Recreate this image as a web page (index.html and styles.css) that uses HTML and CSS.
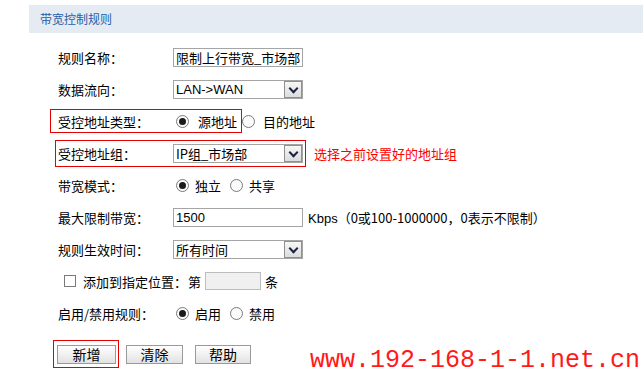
FILE: index.html
```html
<!DOCTYPE html>
<html lang="zh">
<head>
    <meta charset="UTF-8">
    <title>带宽控制规则</title>
    <link rel="stylesheet" href="styles.css">
</head>
<body>
    <div class="panel-title">带宽控制规则</div>

    <div class="rule-form">
        <div class="form-row">
            <span class="row-label">规则名称：</span>
            <span class="text-box wide">限制上行带宽_市场部</span>
        </div>

        <div class="form-row">
            <span class="row-label">数据流向：</span>
            <span class="select-box"><span class="select-text latin">LAN-&gt;WAN</span><span class="select-arrow"></span></span>
        </div>

        <div class="form-row">
            <span class="mark mark-type"></span>
            <span class="row-label">受控地址类型：</span>
            <span class="radio checked"></span><span class="opt opt-src">源地址</span>
            <span class="radio"></span><span class="opt opt-dst">目的地址</span>
        </div>

        <div class="form-row">
            <span class="mark mark-group"></span>
            <span class="row-label">受控地址组：</span>
            <span class="select-box"><span class="select-text">IP组_市场部</span><span class="select-arrow"></span></span>
            <span class="note">选择之前设置好的地址组</span>
        </div>

        <div class="form-row">
            <span class="row-label">带宽模式：</span>
            <span class="radio checked"></span><span class="opt">独立</span>
            <span class="radio"></span><span class="opt">共享</span>
        </div>

        <div class="form-row">
            <span class="row-label">最大限制带宽：</span>
            <span class="text-box wide latin">1500</span>
            <span class="unit"><span class="latin">Kbps</span>（0或100-1000000，0表示不限制）</span>
        </div>

        <div class="form-row">
            <span class="row-label">规则生效时间：</span>
            <span class="select-box"><span class="select-text">所有时间</span><span class="select-arrow"></span></span>
        </div>

        <div class="form-row">
            <span class="check-label"><span class="checkbox"></span>添加到指定位置：</span>
            <span class="pos-text">第</span>
            <span class="text-box small"></span>
            <span class="pos-text">条</span>
        </div>

        <div class="form-row">
            <span class="row-label">启用/禁用规则：</span>
            <span class="radio checked"></span><span class="opt">启用</span>
            <span class="radio"></span><span class="opt">禁用</span>
        </div>

        <div class="button-row">
            <span class="mark mark-add"></span>
            <button class="btn btn-add">新增</button>
            <button class="btn btn-clear">清除</button>
            <button class="btn btn-help">帮助</button>
            <span class="watermark">www.192-168-1-1.net.cn</span>
        </div>
    </div>
</body>
</html>
```

FILE: styles.css
```css
:root {
    --title-bg: #e4ebf3;
    --title-text: #1f5fa6;
    --border-gray: #a5a5a5;
    --mark-red: #e60000;
    --text-main: #000000;
}

* {
    margin: 0;
    padding: 0;
    box-sizing: border-box;
}

body {
    font-family: "Noto Sans CJK SC", sans-serif;
    font-size: 13px;
    color: var(--text-main);
    background: #ffffff;
    width: 643px;
    height: 379px;
    overflow: hidden;
}

.latin {
    font-family: "Liberation Sans", "Noto Sans CJK SC", sans-serif;
}

.panel-title {
    margin: 5px 0 0 29px;
    height: 28px;
    line-height: 28px;
    padding-left: 11px;
    background: var(--title-bg);
    color: var(--title-text);
    font-size: 12px;
}

.rule-form {
    padding-top: 8px;
}

.form-row {
    position: relative;
    display: flex;
    align-items: center;
    height: 32px;
}

.row-label {
    width: 173px;
    padding-left: 58px;
    flex-shrink: 0;
    white-space: nowrap;
}

.text-box {
    display: flex;
    align-items: center;
    height: 19px;
    border: 1px solid var(--border-gray);
    padding-left: 2px;
    line-height: 1;
    white-space: nowrap;
    overflow: hidden;
}

.text-box.wide {
    width: 130px;
}

.text-box.small {
    width: 56px;
    height: 18px;
    background: #f0f0f0;
    border-color: #bdbdbd;
}

.select-box {
    display: flex;
    align-items: center;
    width: 130px;
    height: 19px;
    border: 1px solid var(--border-gray);
    padding-left: 2px;
}

.select-text {
    flex: 1;
    line-height: 1;
    white-space: nowrap;
}

.select-arrow {
    position: relative;
    width: 18px;
    height: 17px;
    border: 1px solid #8f8f8f;
    background: linear-gradient(#f7f7f7, #dcdcdc);
}

.select-arrow::after {
    content: "";
    position: absolute;
    left: 5px;
    top: 3px;
    width: 5px;
    height: 5px;
    border-right: 2px solid #1a2440;
    border-bottom: 2px solid #1a2440;
    transform: rotate(45deg);
}

.radio {
    width: 13px;
    height: 13px;
    margin-left: 3px;
    border: 1px solid #7a7a7a;
    border-radius: 50%;
    background: #fafafa;
    display: flex;
    align-items: center;
    justify-content: center;
    flex-shrink: 0;
}

.radio.checked::after {
    content: "";
    width: 7px;
    height: 7px;
    border-radius: 50%;
    background: #1a1a1a;
}

.opt {
    margin-left: 6px;
    margin-right: 6px;
}

.opt-src {
    margin-left: 9px;
    margin-right: 2px;
}

.opt-dst {
    margin-left: 8px;
}

.note {
    margin-left: 11px;
    color: #ff0000;
}

.unit {
    margin-left: 5px;
    white-space: nowrap;
}

.check-label {
    display: flex;
    align-items: center;
    width: 188px;
    padding-left: 64px;
    flex-shrink: 0;
}

.checkbox {
    width: 12px;
    height: 12px;
    border: 1px solid #7a7a7a;
    margin-right: 7px;
}

.pos-text {
    margin-right: 4px;
}

.text-box.small + .pos-text {
    margin-left: 4px;
}

.mark {
    position: absolute;
    border: 1px solid var(--mark-red);
}

.mark-type {
    left: 50px;
    top: 4px;
    width: 192px;
    height: 24px;
}

.mark-group {
    left: 55px;
    top: 3px;
    width: 251px;
    height: 27px;
}

.button-row {
    position: relative;
    display: flex;
    align-items: center;
    height: 32px;
    margin-top: 9px;
    padding-left: 57px;
}

.mark-add {
    left: 53px;
    top: 2px;
    width: 66px;
    height: 28px;
}

.btn {
    height: 19px;
    border: 1px solid #9a9a9a;
    background: linear-gradient(#ffffff, #e2e2e2);
    font-family: "Noto Sans CJK SC", sans-serif;
    font-size: 14px;
    line-height: 1;
    color: #000;
}

.btn-add {
    width: 59px;
}

.btn-clear {
    width: 57px;
    margin-left: 10px;
}

.btn-help {
    width: 56px;
    margin-left: 12px;
}

.watermark {
    margin-left: auto;
    margin-right: 3px;
    margin-top: 12px;
    font-family: "Liberation Mono", monospace;
    font-size: 25px;
    color: #ff1a1a;
    white-space: nowrap;
}
```
